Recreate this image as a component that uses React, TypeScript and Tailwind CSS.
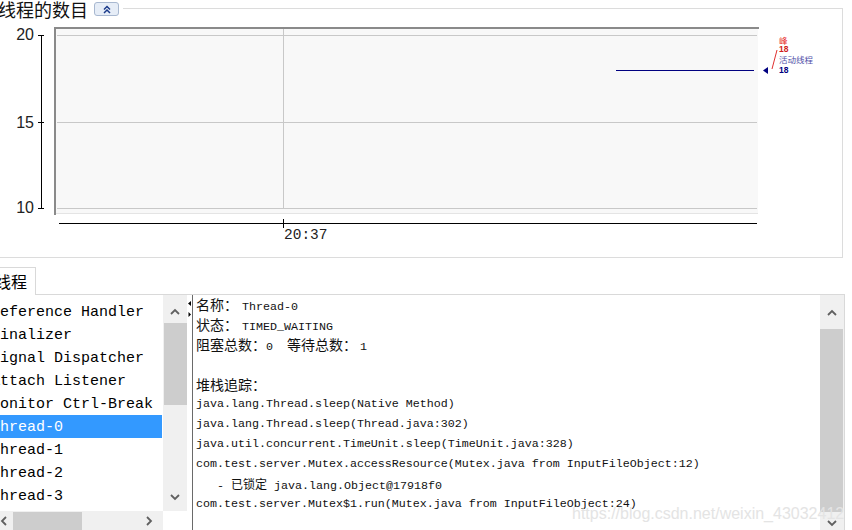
import React from 'react';

const mono = "font-['Liberation_Mono','Noto_Sans_CJK_SC',monospace]";
const cjk = "font-['Noto_Sans_CJK_SC',sans-serif]";

const threads = [
  'Reference Handler',
  'Finalizer',
  'Signal Dispatcher',
  'Attach Listener',
  'Monitor Ctrl-Break',
  'Thread-0',
  'Thread-1',
  'Thread-2',
  'Thread-3',
];

function Chevron({ dir, className = '' }: { dir: 'up' | 'down' | 'left' | 'right'; className?: string }) {
  const pts = {
    up: '1,6 5,2 9,6',
    down: '1,2 5,6 9,2',
    left: '6,1 2,5 6,9',
    right: '2,1 6,5 2,9',
  }[dir];
  const w = dir === 'up' || dir === 'down' ? 10 : 8;
  const h = dir === 'up' || dir === 'down' ? 8 : 10;
  return (
    <svg width={w} height={h} viewBox={`0 0 ${w} ${h}`} className={className}>
      <polyline points={pts} fill="none" stroke="#606060" strokeWidth="1.8" />
    </svg>
  );
}

function ThreadChart() {
  const grid = '#c8c8c8';
  return (
    <svg className="absolute left-0 top-0" width="852" height="262">
      <rect x="55" y="28" width="703" height="186" fill="#f8f8f8" />
      <line x1="54" y1="28" x2="759" y2="28" stroke="#8a8a8a" strokeWidth="2" />
      <line x1="55" y1="27" x2="55" y2="215" stroke="#8a8a8a" strokeWidth="2" />
      <line x1="56" y1="213.5" x2="758" y2="213.5" stroke="#e4e4e4" />
      <line x1="57" y1="35.5" x2="757" y2="35.5" stroke={grid} />
      <line x1="57" y1="122.5" x2="757" y2="122.5" stroke={grid} />
      <line x1="57" y1="208.5" x2="757" y2="208.5" stroke={grid} />
      <line x1="283.5" y1="29" x2="283.5" y2="208" stroke={grid} />

      {/* y axis */}
      <line x1="41.5" y1="35" x2="41.5" y2="209" stroke="#000" />
      <line x1="38" y1="35.5" x2="44" y2="35.5" stroke="#000" />
      <line x1="38" y1="122.5" x2="44" y2="122.5" stroke="#000" />
      <line x1="38" y1="208.5" x2="44" y2="208.5" stroke="#000" />
      <g fontFamily="Liberation Sans, sans-serif" fontSize="16" fill="#222" textAnchor="end">
        <text x="34" y="40">20</text>
        <text x="34" y="128">15</text>
        <text x="34" y="213">10</text>
      </g>

      {/* x axis */}
      <line x1="59" y1="223.5" x2="757" y2="223.5" stroke="#000" />
      <line x1="283.5" y1="219" x2="283.5" y2="228" stroke="#000" />
      <text x="284" y="239" fontFamily="Liberation Mono, monospace" fontSize="14.5" fill="#222">
        20:37
      </text>

      {/* series */}
      <line x1="616" y1="70.5" x2="754" y2="70.5" stroke="#000080" />
      <polygon points="763,70.5 768,67 768,74" fill="#000080" />
      <line x1="772" y1="69" x2="777" y2="50" stroke="#e03030" />
      <g fontFamily="Noto Sans CJK SC, sans-serif" fontSize="8.5">
        <text x="779" y="44" fill="#e83030">峰</text>
        <text x="779" y="52" fill="#d02020" fontWeight="bold" fontFamily="Liberation Sans, sans-serif">18</text>
        <text x="779" y="63" fill="#5050a8">活动线程</text>
        <text x="779" y="73" fill="#000080" fontWeight="bold" fontFamily="Liberation Sans, sans-serif">18</text>
      </g>
    </svg>
  );
}

function Line({ children }: { children?: React.ReactNode }) {
  return <div className="flex h-[20px] items-baseline whitespace-pre leading-[20px]">{children}</div>;
}

export default function App() {
  return (
    <div className="relative h-[530px] w-[852px] overflow-hidden bg-white text-black">
      {/* thread count group */}
      <div className="relative h-[262px] pt-[8px]">
        <div className="relative mr-[9px] h-[250px] border-b border-r border-t border-[#dcdcdc]">
          <div className="absolute left-[-2px] top-[-10px] flex items-center gap-[6px] bg-white pr-[4px]">
            <span className={`${cjk} text-[18px] leading-[20px] text-[#111]`}>线程的数目</span>
            <button className="flex h-[14px] w-[25px] items-center justify-center rounded-[3px] border border-[#a8b8d0] bg-[#e6edf7]">
              <svg width="8" height="9" viewBox="0 0 8 9">
                <polyline points="1,4.5 4,1.5 7,4.5" fill="none" stroke="#1a3a8a" strokeWidth="1.5" />
                <polyline points="1,8 4,5 7,8" fill="none" stroke="#1a3a8a" strokeWidth="1.5" />
              </svg>
            </button>
          </div>
        </div>
        <ThreadChart />
      </div>

      {/* threads tab */}
      <div className="flex h-[268px] flex-col">
        <div className="flex h-[33px]">
          <div className="-ml-[1px] mt-[5px] w-[37px] border-r border-t border-[#d9d9d9] bg-white">
            <div className={`${cjk} -ml-[4px] mt-[3px] text-[16px] leading-[20px]`}>线程</div>
          </div>
          <div className="mr-[7px] flex-1 border-b border-[#d9d9d9]" />
        </div>

        <div className="flex h-[235px] w-[845px] border-r border-[#d9d9d9]">
          {/* thread list */}
          <div className="flex w-[187px] flex-col">
            <div className="flex h-[216px]">
              <div className={`${mono} w-[163px] overflow-hidden pt-[5px] text-[15px]`}>
                {threads.map((t) => (
                  <div
                    key={t}
                    className={`h-[23px] w-[162px] whitespace-nowrap pt-[3px] leading-[20px] ${
                      t === 'Thread-0' ? 'bg-[#3399ff] text-white' : ''
                    }`}
                  >
                    <span className="-ml-[9px] inline-block">{t}</span>
                  </div>
                ))}
              </div>
              <div className="relative w-[24px] bg-[#f0f0f0]">
                <Chevron dir="up" className="absolute left-[7px] top-[13px]" />
                <div className="absolute left-[1px] right-0 top-[28px] h-[82px] bg-[#cdcdcd]" />
                <Chevron dir="down" className="absolute left-[7px] top-[198px]" />
              </div>
            </div>
            <div className="flex h-[19px]">
              <div className="relative w-[163px] bg-[#f0f0f0]">
                <Chevron dir="left" className="absolute left-[0px] top-[5px]" />
                <div className="absolute bottom-0 left-[13px] top-[1px] w-[69px] bg-[#cdcdcd]" />
                <Chevron dir="right" className="absolute left-[145px] top-[5px]" />
              </div>
            </div>
          </div>

          {/* splitter */}
          <div className="relative w-[5px]">
            <svg className="absolute left-0 top-0" width="5" height="24">
              <polygon points="1,8.5 4,6 4,11" fill="#000" />
              <polygon points="1.5,17 4,19.5 1.5,22" fill="#000" />
            </svg>
          </div>

          {/* details */}
          <div className={`${mono} flex-1 border-l border-[#6a6a6a] pl-[3px] text-[11.67px] text-[#111]`}>
            <div className="-mt-[1px]">
              <Line>
                <span className={`${cjk} text-[14px]`}>名称：</span>
                <span className="ml-[4px]">Thread-0</span>
              </Line>
              <Line>
                <span className={`${cjk} text-[14px]`}>状态：</span>
                <span className="ml-[4px]">TIMED_WAITING</span>
              </Line>
              <Line>
                <span className={`${cjk} text-[14px]`}>阻塞总数：</span>
                <span>0  </span>
                <span className={`${cjk} text-[14px]`}>等待总数：</span>
                <span className="ml-[3px]">1</span>
              </Line>
              <Line />
              <Line>
                <span className={`${cjk} text-[14px]`}>堆栈追踪：</span>
              </Line>
              <Line>java.lang.Thread.sleep(Native Method)</Line>
              <Line>java.lang.Thread.sleep(Thread.java:302)</Line>
              <Line>java.util.concurrent.TimeUnit.sleep(TimeUnit.java:328)</Line>
              <Line>com.test.server.Mutex.accessResource(Mutex.java from InputFileObject:12)</Line>
              <Line>
                <span>{'   - '}</span>
                <span className={`${cjk} text-[12px]`}>已锁定</span>
                <span>{' java.lang.Object@17918f0'}</span>
              </Line>
              <Line>com.test.server.Mutex$1.run(Mutex.java from InputFileObject:24)</Line>
            </div>
          </div>

          <div className="relative w-[24px] bg-[#f0f0f0]">
            <Chevron dir="up" className="absolute left-[7px] top-[14px]" />
            <div className="absolute left-0 right-[1px] top-[34px] h-[183px] bg-[#cdcdcd]" />
            <Chevron dir="down" className="absolute left-[7px] top-[224px]" />
          </div>
        </div>
      </div>

      <div className="pointer-events-none absolute left-[572px] top-[502px] font-['Liberation_Sans',sans-serif] text-[16px] text-[#e4e4e4]">
        https://blog.csdn.net/weixin_43032412
      </div>
    </div>
  );
}
